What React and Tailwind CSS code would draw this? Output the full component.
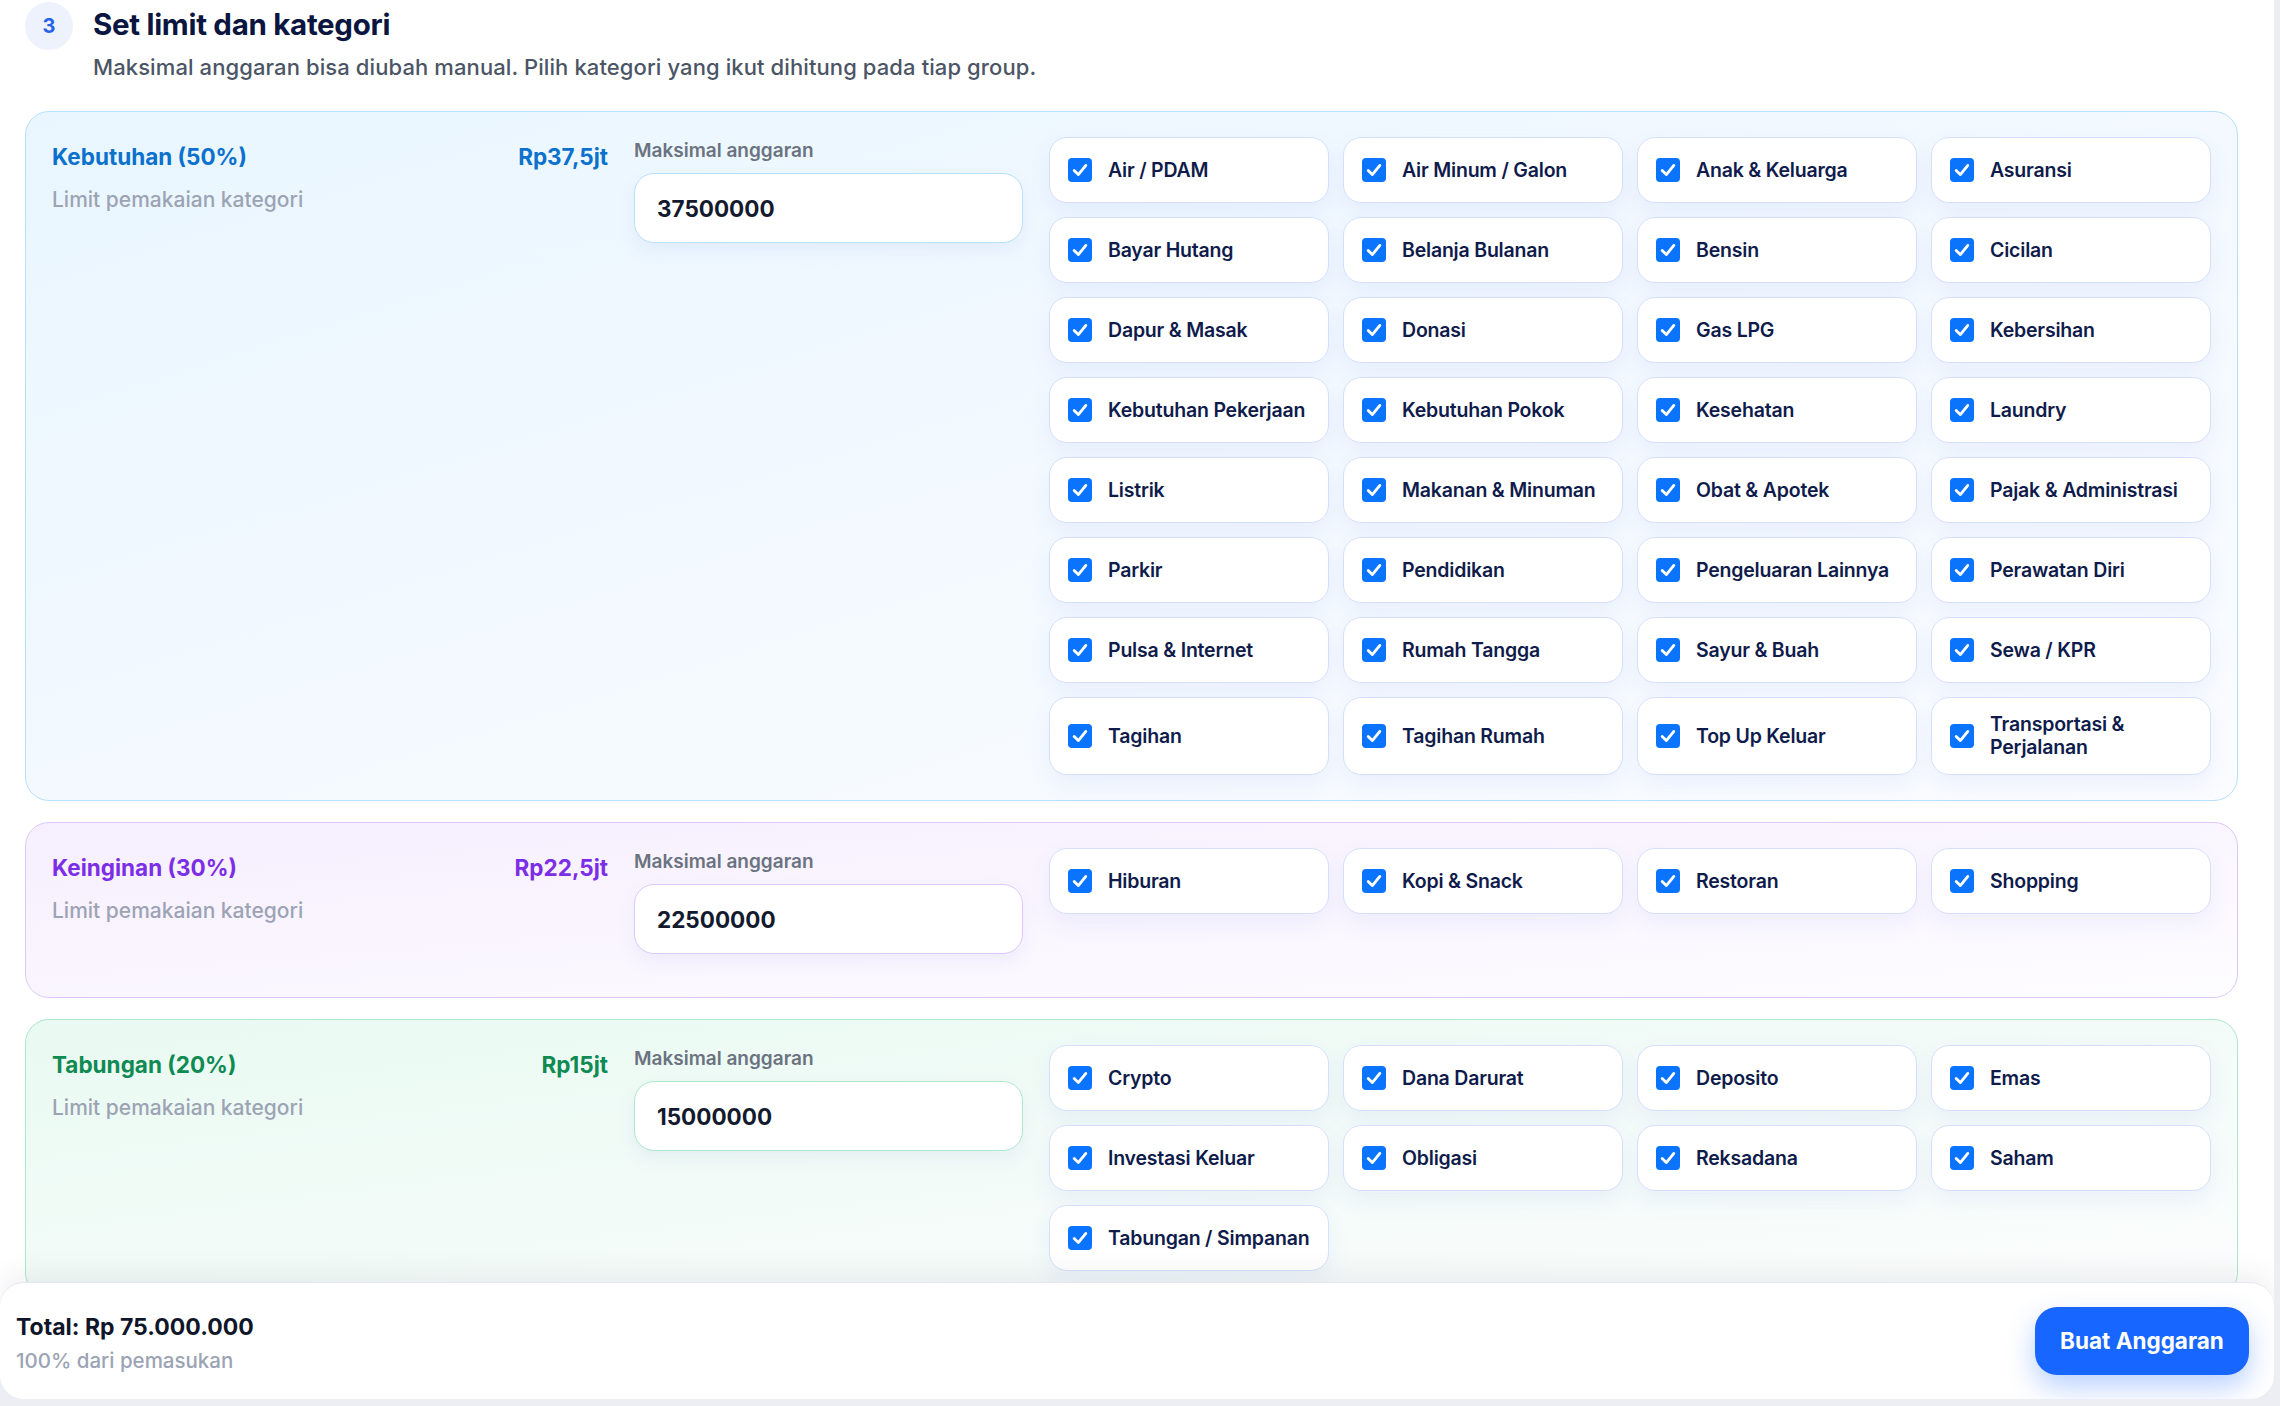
import React from "react";

const groups = [
  {
    title: "Kebutuhan (50%)",
    amount: "Rp37,5jt",
    value: "37500000",
    card: "border-[#b6e0fb] bg-linear-to-br from-[#e9f6ff] via-[#f3f9ff] to-[#fafcff]",
    text: "text-[#0b71cd]",
    input: "border-[#b6e0fb]",
    items: [
      "Air / PDAM", "Air Minum / Galon", "Anak & Keluarga", "Asuransi",
      "Bayar Hutang", "Belanja Bulanan", "Bensin", "Cicilan",
      "Dapur & Masak", "Donasi", "Gas LPG", "Kebersihan",
      "Kebutuhan Pekerjaan", "Kebutuhan Pokok", "Kesehatan", "Laundry",
      "Listrik", "Makanan & Minuman", "Obat & Apotek", "Pajak & Administrasi",
      "Parkir", "Pendidikan", "Pengeluaran Lainnya", "Perawatan Diri",
      "Pulsa & Internet", "Rumah Tangga", "Sayur & Buah", "Sewa / KPR",
      "Tagihan", "Tagihan Rumah", "Top Up Keluar", "Transportasi & Perjalanan",
    ],
  },
  {
    title: "Keinginan (30%)",
    amount: "Rp22,5jt",
    value: "22500000",
    card: "border-[#dec8fb] bg-linear-to-br from-[#f6efff] via-[#faf6ff] to-[#fdfcff]",
    text: "text-[#7b2ee6]",
    input: "border-[#dec8fb]",
    items: ["Hiburan", "Kopi & Snack", "Restoran", "Shopping"],
  },
  {
    title: "Tabungan (20%)",
    amount: "Rp15jt",
    value: "15000000",
    card: "border-[#ade8cc] bg-linear-to-br from-[#e9faf2] via-[#f3fbf8] to-[#fbfdfd]",
    text: "text-[#0e8a52]",
    input: "border-[#ade8cc]",
    items: [
      "Crypto", "Dana Darurat", "Deposito", "Emas",
      "Investasi Keluar", "Obligasi", "Reksadana", "Saham",
      "Tabungan / Simpanan",
    ],
  },
];

function Check() {
  return (
    <span className="flex h-[24px] w-[24px] shrink-0 items-center justify-center rounded-[4px] bg-[#0a74ff]">
      <svg viewBox="0 0 24 24" className="h-[20px] w-[20px]" fill="none">
        <polyline points="5,12.5 10,17.5 19,6.5" stroke="white" strokeWidth="3.4" strokeLinecap="round" strokeLinejoin="round" />
      </svg>
    </span>
  );
}

function Item({ label }) {
  return (
    <div className="flex min-h-[66px] items-center gap-[16px] rounded-[18px] border border-[#d6dffc] bg-white py-[15px] pl-[18px] pr-[10px] shadow-[0_10px_22px_rgba(90,120,230,0.08)]">
      <Check />
      <span className="text-[19.5px] font-semibold leading-[23px] tracking-[-0.2px] text-[#0f1b4b]">{label}</span>
    </div>
  );
}

function Group({ g }) {
  return (
    <div className={`flex items-start gap-[26px] rounded-[24px] border px-[26px] pb-[25px] pt-[25px] ${g.card}`}>
      <div className="w-[556px] shrink-0 pt-[4px]">
        <div className={`flex items-center justify-between text-[22.5px] font-bold leading-[32px] ${g.text}`}>
          <span>{g.title}</span>
          <span>{g.amount}</span>
        </div>
        <div className="mt-[11px] text-[21px] font-medium leading-[32px] text-[#9ca3b4]">
          Limit pemakaian kategori
        </div>
      </div>
      <div className="w-[389px] shrink-0 pb-[18px]">
        <div className="text-[19px] font-semibold leading-[28px] text-[#6b7280]">Maksimal anggaran</div>
        <input
          readOnly
          value={g.value}
          className={`mt-[8px] h-[70px] w-full rounded-[20px] border bg-white px-[22px] text-[22.5px] font-bold text-[#131a2e] shadow-[0_8px_18px_rgba(90,120,200,0.08)] outline-none ${g.input}`}
        />
      </div>
      <div className="grid flex-1 grid-cols-4 gap-[14px]">
        {g.items.map((it) => (
          <Item key={it} label={it} />
        ))}
      </div>
    </div>
  );
}

export default function App() {
  return (
    <div
      className="h-[1406px] w-full overflow-hidden bg-[#eceef4]"
      style={{ fontFamily: "Inter, 'Noto Sans', 'Liberation Sans', sans-serif" }}
    >
      <div className="relative h-[1399px] w-[2274px] overflow-hidden rounded-b-[24px] bg-white">
        <div className="flex items-start gap-[20px] pl-[25px] pt-[2px]">
          <div className="flex h-[48px] w-[48px] shrink-0 items-center justify-center rounded-full bg-[#edf2fc] text-[20px] font-bold text-[#2563eb]">
            3
          </div>
          <div>
            <div className="mt-[4px] text-[29.5px] font-bold leading-[36px] tracking-[-0.3px] text-[#0b1640]">
              Set limit dan kategori
            </div>
            <div className="mt-[10px] text-[22px] font-medium leading-[30px] tracking-[0.1px] text-[#4b5565]">
              Maksimal anggaran bisa diubah manual. Pilih kategori yang ikut dihitung pada tiap group.
            </div>
          </div>
        </div>

        <div className="mt-[29px] flex flex-col gap-[21px] pl-[25px] pr-[36px]">
          {groups.map((g) => (
            <Group key={g.title} g={g} />
          ))}
        </div>

        <div className="absolute bottom-0 left-0 right-0 flex h-[117px] items-center justify-between rounded-[24px] border-t border-[#e4e7ee] bg-white pl-[16px] pr-[25px] shadow-[0_-10px_28px_rgba(15,23,42,0.06)]">
          <div className="mt-[5px]">
            <div className="text-[23px] font-bold leading-[32px] text-[#0f1629]">Total: Rp 75.000.000</div>
            <div className="mt-[2px] text-[20.5px] font-medium leading-[32px] text-[#9ca3b4]">100% dari pemasukan</div>
          </div>
          <button className="h-[68px] w-[214px] rounded-[22px] bg-[#1766ff] text-[22.5px] font-bold text-white shadow-[0_12px_28px_rgba(23,102,255,0.3)]">
            Buat Anggaran
          </button>
        </div>
      </div>
    </div>
  );
}
